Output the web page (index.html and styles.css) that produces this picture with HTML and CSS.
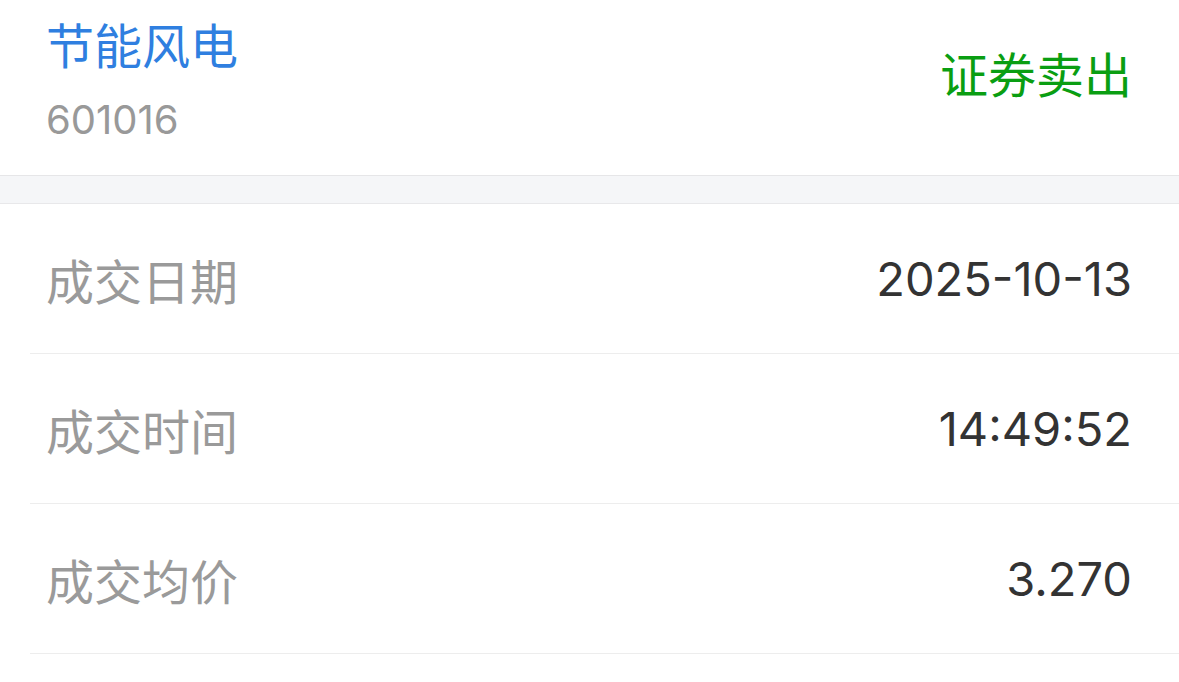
FILE: index.html
```html
<!DOCTYPE html>
<html lang="zh-CN">
<head>
<meta charset="utf-8">
<title>成交详情</title>
<link rel="stylesheet" href="styles.css">
</head>
<body>
<div class="page">
  <header class="head">
    <div class="stock">
      <div class="stock-name">节能风电</div>
      <div class="stock-code">601016</div>
    </div>
    <div class="trade-type">证券卖出</div>
  </header>
  <div class="band"></div>
  <div class="rows">
    <div class="row"><span class="label">成交日期</span><span class="value">2025-10-13</span></div>
    <div class="row"><span class="label">成交时间</span><span class="value">14:49:52</span></div>
    <div class="row"><span class="label">成交均价</span><span class="value">3.270</span></div>
  </div>
</div>
</body>
</html>
```
FILE: styles.css
```css
* { box-sizing: border-box; }
html, body { margin: 0; padding: 0; background: #ffffff; }
body {
  font-family: Inter, "Noto Sans CJK SC", sans-serif;
  width: 1179px;
  height: 682px;
  overflow: hidden;
}
.head {
  height: 176px;
  display: flex;
  justify-content: space-between;
  align-items: flex-start;
  padding: 0 47px 0 46px;
  border-bottom: 1px solid #e6e6e8;
}
.stock { display: flex; flex-direction: column; padding-top: 13px; }
.stock-name {
  font-family: "Noto Sans CJK SC", sans-serif;
  font-size: 48px;
  line-height: 60px;
  color: #2f7fe0;
}
.stock-code {
  font-size: 40px;
  line-height: 50px;
  margin-top: 22px;
  color: #999999;
}
.trade-type {
  font-family: "Noto Sans CJK SC", sans-serif;
  font-size: 48px;
  line-height: 60px;
  margin-top: 42px;
  color: #0a9e12;
}
.band {
  height: 28px;
  background: #f5f6f8;
  border-bottom: 1px solid #e8e8ea;
}
.rows { padding-left: 30px; }
.row {
  height: 150px;
  display: flex;
  justify-content: space-between;
  align-items: center;
  padding: 0 47px 0 16px;
  border-bottom: 1px solid #ededed;
}
.label {
  font-family: "Noto Sans CJK SC", sans-serif;
  font-size: 48px;
  color: #9a9a9a;
}
.value {
  font-size: 47px;
  color: #333333;
}
```
